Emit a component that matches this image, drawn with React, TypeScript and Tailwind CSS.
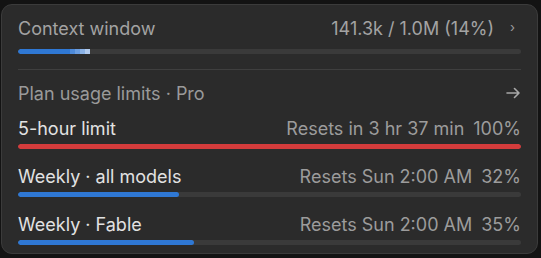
import React from 'react';

interface LimitRowProps {
    label: string;
    detail: string;
    percent: number;
    color: string;
}

const LimitRow: React.FC<LimitRowProps> = ({ label, detail, percent, color }) => (
    <div>
        <div className="flex items-center justify-between h-[22px]">
            <span className="text-[#e2e2e2]">{label}</span>
            <span className="text-[#9c9c9c]">
                {detail}
                <span className="ml-[9px]">{percent}%</span>
            </span>
        </div>
        <div className="mt-[5px] h-[5px] rounded-full bg-[#3a3a3a] overflow-hidden">
            <div className={`h-full rounded-full ${color}`} style={{ width: `${percent}%` }} />
        </div>
    </div>
);

const App: React.FC = () => {
    return (
        <div className="w-[541px] h-[258px] bg-[#131313] pt-[4px] pl-[1px]" style={{ fontFamily: 'Inter, "Noto Sans", sans-serif' }}>
            <div className="w-[537px] h-[250px] rounded-[11px] border border-[#3b3b3b] bg-[#2b2b2b] px-[16px] pt-[12px] text-[18px]">
                <div className="flex items-center justify-between h-[22px] text-[#a3a3a3]">
                    <span>Context window</span>
                    <span className="flex items-center">
                        141.3k / 1.0M (14%)
                        <span className="ml-[16px] mr-[6px] text-[13px] text-[#9c9c9c]">›</span>
                    </span>
                </div>
                <div className="mt-[10px] h-[5px] rounded-full bg-[#3a3a3a] flex overflow-hidden">
                    <div className="w-[52px] h-full bg-[#2f78d4] rounded-l-full" />
                    <div className="w-[5px] h-full bg-[#4d8ad9]" />
                    <div className="w-[5px] h-full bg-[#6a9de0]" />
                    <div className="w-[5px] h-full bg-[#8ab2e6]" />
                    <div className="w-[5px] h-full bg-[#b1cbee]" />
                </div>
                <div className="mt-[15px] h-px bg-[#3f3f3f]" />
                <div className="mt-[12px] flex items-center justify-between h-[22px] text-[#9a9a9a]">
                    <span>Plan usage limits · Pro</span>
                    <svg width="15" height="12" viewBox="0 0 15 12" fill="none" stroke="#a8a8a8" strokeWidth="1.6" strokeLinecap="round" strokeLinejoin="round">
                        <path d="M1 6h12M8.5 1.5L13 6l-4.5 4.5" />
                    </svg>
                </div>
                <div className="mt-[13px]">
                    <LimitRow label="5-hour limit" detail="Resets in 3 hr 37 min" percent={100} color="bg-[#d43c3c]" />
                </div>
                <div className="mt-[16px]">
                    <LimitRow label="Weekly · all models" detail="Resets Sun 2:00 AM" percent={32} color="bg-[#2f78d4]" />
                </div>
                <div className="mt-[16px]">
                    <LimitRow label="Weekly · Fable" detail="Resets Sun 2:00 AM" percent={35} color="bg-[#2f78d4]" />
                </div>
            </div>
        </div>
    );
};

export default App;
